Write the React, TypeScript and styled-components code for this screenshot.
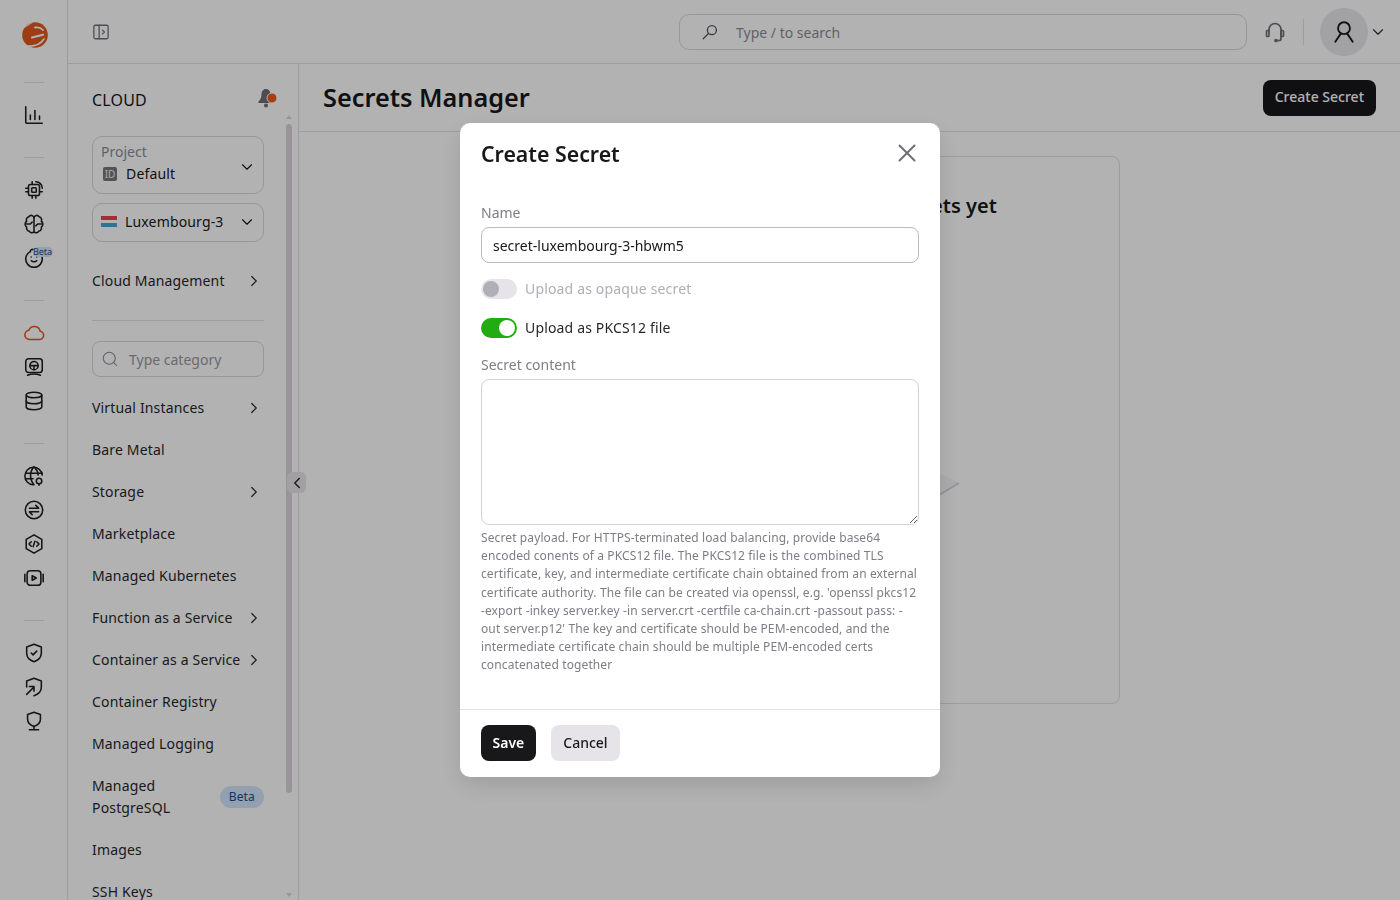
import React from "react";
import styled, { createGlobalStyle } from "styled-components";
import { ChevronDown, ChevronLeft, ChevronRight, Search, X } from "lucide-react";

const GlobalStyle = createGlobalStyle`
  * { box-sizing: border-box; }
  html, body { margin: 0; height: 100%; overflow: hidden; }
  body { font-family: "Noto Sans", "Open Sans", sans-serif; color: #18181b; background: #fff; letter-spacing: 0.01em; }
`;

const line = "#e2e0e6";

// shell
const Page = styled.div`
  display: flex;
  width: 1400px;
  height: 900px;
  overflow: hidden;
`;
const Rail = styled.nav`
  flex: 0 0 68px;
  border-right: 1px solid ${line};
  display: flex;
  flex-direction: column;
  align-items: center;
  padding-top: 20px;
`;
const RailLogo = styled.div`
  height: 30px;
  margin: 0 0 32px 3px;
  display: flex;
  align-items: center;
`;
const RailSep = styled.div`
  width: 20px;
  height: 1px;
  flex: none;
  background: ${line};
`;
const RailGroup = styled.div`
  padding: 15px 0 25px;
  display: flex;
  flex-direction: column;
`;
const RailIcon = styled.div<{ $active?: boolean }>`
  position: relative;
  width: 24px;
  height: 34px;
  display: flex;
  align-items: center;
  justify-content: center;
  color: ${(p) => (p.$active ? "#e2571e" : "#1f1f23")};
`;
const TinyBeta = styled.span`
  position: absolute;
  top: 6px;
  left: 11px;
  height: 10px;
  width: 20px;
  border-radius: 5px;
  background: #d3e5fb;
  color: #1d4d8b;
  font-size: 9px;
  line-height: 10px;
  letter-spacing: 0;
  text-align: center;
`;
const Body = styled.div`
  flex: 1;
  min-width: 0;
  display: flex;
  flex-direction: column;
`;
const Header = styled.header`
  flex: 0 0 64px;
  border-bottom: 1px solid ${line};
  display: flex;
  align-items: center;
  padding: 0 0 0 24px;
`;
const ToggleSide = styled.div`
  display: flex;
  flex: none;
  color: #6f6e77;
`;
const GlobalSearch = styled.div`
  flex: none;
  margin-left: 569px;
  width: 568px;
  height: 36px;
  border: 1px solid #d9d7dd;
  border-radius: 10px;
  display: flex;
  align-items: center;
  gap: 17px;
  padding: 1px 0 0 21px;
  color: #8e8c95;
  font-size: 14px;
  letter-spacing: 0;
`;
const Headset = styled.div`
  flex: none;
  margin-left: 16px;
  display: flex;
  color: #6f6e77;
`;
const HeaderSep = styled.div`
  flex: none;
  width: 1px;
  height: 26px;
  background: ${line};
  margin: 0 16px 0 16px;
`;
const Avatar = styled.div`
  flex: none;
  width: 48px;
  height: 48px;
  border-radius: 50%;
  background: #e9e8ec;
  display: flex;
  align-items: center;
  justify-content: center;
  color: #18181b;
`;
const AvatarCaret = styled.div`
  flex: none;
  display: flex;
  margin-left: 1px;
  color: #2b2b30;
`;

// sidebar
const Columns = styled.div`
  flex: 1;
  min-height: 0;
  display: flex;
`;
const Sidebar = styled.aside`
  position: relative;
  flex: 0 0 231px;
  border-right: 1px solid ${line};
  padding: 0 34px 0 24px;
  overflow: hidden;
`;
const SideHead = styled.div`
  height: 72px;
  display: flex;
  align-items: center;
  justify-content: space-between;
  font-size: 16px;
`;
const BellWrap = styled.div`
  display: flex;
  margin: -5px -14px 0 0;
`;
const ProjectBox = styled.div`
  height: 58px;
  border: 1px solid #d9d7dd;
  border-radius: 10px;
  padding: 5px 10px 0 8px;
  position: relative;
  font-size: 14px;
  line-height: 19px;
`;
const ProjectLabel = styled.div`
  color: #8e8c95;
  letter-spacing: 0;
`;
const ProjectValue = styled.div`
  display: flex;
  align-items: center;
  gap: 9px;
  margin: 3px 0 0 2px;
`;
const IdBadge = styled.span`
  width: 14px;
  height: 14px;
  border-radius: 2px;
  background: #77767e;
  color: #f2f2f2;
  font-size: 10px;
  line-height: 14px;
  letter-spacing: 0;
  text-align: center;
`;
const BoxCaret = styled.div`
  position: absolute;
  right: 7px;
  top: 21px;
  display: flex;
`;
const RegionBox = styled.div`
  margin-top: 9px;
  height: 39px;
  border: 1px solid #d9d7dd;
  border-radius: 10px;
  padding: 0 7px 2px 8px;
  display: flex;
  align-items: center;
  justify-content: space-between;
  font-size: 14px;
`;
const RegionName = styled.div`
  display: flex;
  align-items: center;
  gap: 8px;
`;
const Flag = styled.span`
  width: 16px;
  height: 11px;
  background: linear-gradient(#e0474c 0 33%, #fff 33% 66%, #3fa5d6 66%);
`;
const MenuRow = styled.div`
  display: flex;
  align-items: center;
  justify-content: space-between;
  padding: 10px 0;
  font-size: 14px;
  line-height: 22px;
  color: #27272a;
`;
const MenuCaret = styled.div`
  display: flex;
  margin-right: 1px;
`;
const TopMenu = styled.div`
  margin-top: 18px;
  padding-bottom: 18px;
  border-bottom: 1px solid ${line};
`;
const CategorySearch = styled.div`
  margin: 20px 0 10px;
  height: 36px;
  border: 1px solid #d9d7dd;
  border-radius: 8px;
  display: flex;
  align-items: center;
  gap: 10px;
  padding-left: 8px;
  font-size: 14px;
  letter-spacing: 0;
  color: #9a98a1;
`;
const BetaPill = styled.span`
  height: 22px;
  padding: 0 9px;
  border-radius: 11px;
  background: #d3e5fb;
  color: #1d4d8b;
  font-size: 12px;
  line-height: 22px;
`;
const ScrollThumb = styled.div`
  position: absolute;
  right: 6px;
  top: 60px;
  width: 6px;
  height: 669px;
  border-radius: 3px;
  background: #d8d6dc;
`;
const ScrollArrow = styled.div<{ $down?: boolean }>`
  position: absolute;
  right: 6px;
  ${(p) => (p.$down ? "bottom: 3px;" : "top: 51px;")}
  width: 0;
  height: 0;
  border-left: 3px solid transparent;
  border-right: 3px solid transparent;
  ${(p) => (p.$down ? "border-top: 4px solid #d8d6dc;" : "border-bottom: 4px solid #d8d6dc;")}
`;
const Collapse = styled.div`
  position: absolute;
  left: 287px;
  top: 472px;
  width: 19px;
  height: 21px;
  border-radius: 5px;
  background: #e8e6ea;
  display: flex;
  align-items: center;
  justify-content: center;
  color: #27272a;
`;

// main area
const Main = styled.main`
  flex: 1;
  min-width: 0;
  display: flex;
  flex-direction: column;
`;
const TitleRow = styled.div`
  flex: 0 0 68px;
  border-bottom: 1px solid ${line};
  display: flex;
  align-items: center;
  justify-content: space-between;
  padding: 0 24px;
`;
const Title = styled.h1`
  margin: 0 0 2px;
  font-size: 25.3px;
  font-weight: 600;
  letter-spacing: 0;
  color: #18181b;
`;
const PrimaryButton = styled.button`
  height: 36px;
  padding: 0 12px 2px;
  border: 0;
  border-radius: 8px;
  background: #18181b;
  color: #fff;
  font: 500 14px "Noto Sans", sans-serif;
`;
const Content = styled.div`
  flex: 1;
  display: flex;
  justify-content: center;
  align-items: flex-start;
  padding-top: 24px;
`;
const EmptyCard = styled.section`
  width: 541px;
  height: 548px;
  margin-left: -1px;
  border: 1px solid ${line};
  border-radius: 8px;
  display: flex;
  flex-direction: column;
  align-items: center;
  padding-top: 34px;
`;
const EmptyTitle = styled.div`
  font-size: 20px;
  font-weight: 600;
  line-height: 30px;
  letter-spacing: 0;
`;
const EmptyArt = styled.svg`
  margin-top: 200px;
`;

// dialog
const Overlay = styled.div`
  position: fixed;
  inset: 0;
  background: rgba(0, 0, 0, 0.3);
`;
const Modal = styled.div`
  position: fixed;
  left: 460px;
  top: 123px;
  width: 480px;
  height: 654px;
  background: #fff;
  border-radius: 10px;
  box-shadow: 0 8px 24px rgba(0, 0, 0, 0.12);
  display: flex;
  flex-direction: column;
`;
const ModalHead = styled.div`
  height: 62px;
  padding: 0 21px 2px;
  display: flex;
  align-items: center;
  justify-content: space-between;
`;
const ModalTitle = styled.h2`
  margin: 0;
  font-size: 21.3px;
  font-weight: 600;
  letter-spacing: 0;
  color: #18181b;
`;
const CloseBtn = styled.div`
  display: flex;
  color: #6f6e77;
  margin-right: -3px;
`;
const ModalBody = styled.div`
  flex: 1;
  padding: 18px 21px 0;
`;
const FieldLabel = styled.div`
  font-size: 14px;
  line-height: 20px;
  letter-spacing: 0;
  color: #7e7c85;
  margin-bottom: 4px;
`;
const TextInput = styled.input`
  display: block;
  width: 100%;
  height: 36px;
  padding: 0 11px;
  border: 1px solid #bcbac2;
  border-radius: 8px;
  outline: none;
  font: 14px "Noto Sans", sans-serif;
  color: #18181b;
`;
const SwitchRow = styled.div<{ $off?: boolean }>`
  display: flex;
  align-items: center;
  gap: 8px;
  height: 20px;
  margin-top: ${(p) => (p.$off ? "16px" : "19px")};
  font-size: 14px;
  color: ${(p) => (p.$off ? "#b0aeb6" : "#27272a")};
`;
const SwitchText = styled.span`
  margin-bottom: 2px;
`;
const Switch = styled.span<{ $on?: boolean }>`
  width: 36px;
  height: 20px;
  flex: none;
  border-radius: 10px;
  padding: 2px;
  display: flex;
  justify-content: ${(p) => (p.$on ? "flex-end" : "flex-start")};
  background: ${(p) => (p.$on ? "#22ac12" : "#e6e4e9")};
  &::after {
    content: "";
    width: 16px;
    height: 16px;
    border-radius: 50%;
    background: ${(p) => (p.$on ? "#fff" : "#b0aeb6")};
  }
`;
const SecretLabel = styled(FieldLabel)`
  margin-top: 17px;
`;
const SecretArea = styled.textarea`
  display: block;
  width: 100%;
  height: 146px;
  border: 1px solid #d4d2d9;
  border-radius: 8px;
  outline: none;
  resize: vertical;
`;
const Help = styled.p`
  margin: 4px 0 0;
  font-size: 12px;
  line-height: 18.2px;
  letter-spacing: 0.11px;
  color: #7e7c85;
`;
const ModalFoot = styled.div`
  height: 68px;
  border-top: 1px solid ${line};
  padding: 15px 21px 0;
  display: flex;
  gap: 15px;
`;
const SaveButton = styled(PrimaryButton)`
  padding: 0 11.5px 2px;
  font-weight: 600;
`;
const CancelButton = styled.button`
  height: 36px;
  padding: 0 12.5px 2px;
  border: 0;
  border-radius: 8px;
  background: #e6e4e9;
  color: #18181b;
  font: 500 14px "Noto Sans", sans-serif;
`;

// drawn icons
const Ico = ({ children, size = 22 }: { children: React.ReactNode; size?: number }) => (
  <svg width={size} height={size} viewBox="0 0 24 24" fill="none" stroke="currentColor" strokeWidth="1.7" strokeLinecap="round" strokeLinejoin="round">
    {children}
  </svg>
);

const Logo = () => (
  <svg width="28" height="30" viewBox="0 0 28 30" fill="none">
    <circle cx="14" cy="15" r="12.800" fill="#e2571e" />
    <path d="M14 7.500c3-.6 6 .4 8 2.500" stroke="#fff" strokeWidth="1.800" strokeLinecap="round" />
    <path d="M11 17.500l11-2.800" stroke="#fff" strokeWidth="2.200" strokeLinecap="round" />
    <path d="M6 26c6 .5 13-1 17-7" stroke="#fff" strokeWidth="1.600" strokeLinecap="round" />
    <path d="M3 8.500C5 5 9 2.500 12.500 2.500 9 4 6 6 3 8.500z" fill="#fff" />
  </svg>
);

const railGroups: React.ReactNode[][] = [
  [
    <Ico key="chart"><path d="M3 3v17a1 1 0 0 0 1 1h17" /><path d="M8 17v-5" /><path d="M13 17V7" /><path d="M18 17v-4" /></Ico>,
  ],
  [
    <Ico key="chip"><rect x="6" y="6" width="12" height="12" rx="2" /><rect x="9.500" y="9.500" width="5" height="5" rx="1" /><path d="M3 10h3M3 14h3M10 18v3M14 18v3M10 3v3M18 14h3" /><path d="M14 3c4 0 7 3 7 7" /></Ico>,
    <Ico key="brain"><path d="M12 4v16" /><path d="M12 5a3 3 0 0 0-5.500-1A3.500 3.500 0 0 0 4 9a4 4 0 0 0 0 6.500A3.500 3.500 0 0 0 7 20a3 3 0 0 0 5 .5 3 3 0 0 0 5-.5 3.500 3.500 0 0 0 3-4.500A4 4 0 0 0 20 9a3.500 3.500 0 0 0-2.500-5A3 3 0 0 0 12 5z" /><path d="M4 12h4l2-2M20 12h-4l-2 2" /></Ico>,
    <React.Fragment key="smile"><Ico><path d="M8 5a9 9 0 1 0 8 0" /><path d="M8 5c0-2 2-3 3-2" /><path d="M9 15c1.500 1.500 4.500 1.500 6 0" /><path d="M9 11h.01M15 11h.01" /></Ico><TinyBeta>Beta</TinyBeta></React.Fragment>,
  ],
  [
    <Ico key="cloud"><path d="M17.500 19H7a5 5 0 0 1-.6-9.960A6.500 6.500 0 0 1 18.800 10.100 4.500 4.500 0 0 1 17.500 19z" /></Ico>,
    <Ico key="monitor"><rect x="3" y="3" width="18" height="15" rx="3" /><circle cx="12" cy="10.500" r="4.500" /><path d="M7.500 10.500h9M12 10.500V15" /><path d="M5 21c4-1.500 10-1.500 14 0" /></Ico>,
    <Ico key="db"><ellipse cx="12" cy="5.500" rx="8.500" ry="3" /><path d="M3.500 5.500v13c0 1.700 3.800 3 8.500 3s8.500-1.300 8.500-3v-13" /><path d="M3.500 12c0 1.700 3.800 3 8.500 3s8.500-1.300 8.500-3" /></Ico>,
  ],
  [
    <Ico key="globe"><path d="M21 11a9.500 9.500 0 1 0-10 10.500" /><path d="M12 2c-5 5-5 14 0 19.500M12 2c3 3 4.500 6 4.500 9" /><path d="M3 9h18M3 15h8" /><circle cx="17.500" cy="17.500" r="3" /><path d="M17.500 20.500v1.500" /></Ico>,
    <Ico key="swap"><circle cx="12" cy="12" r="9.500" /><path d="M7 10h10l-3-3" /><path d="M17 14H7l3 3" /></Ico>,
    <Ico key="code"><path d="M12 2l8.500 5v10L12 22l-8.500-5V7z" /><path d="M9 9.500L6.500 12 9 14.500M15 9.500l2.500 2.500-2.500 2.500M13 9l-2 6" /></Ico>,
    <Ico key="play"><rect x="4.500" y="4" width="15" height="16" rx="3.500" /><path d="M2 8v8M22 8v8" /><path d="M10 9.500v5l4.500-2.500z" /></Ico>,
  ],
  [
    <Ico key="shield"><path d="M12 2.500l8 3v6.500c0 5-3.500 8-8 9.500-4.500-1.500-8-4.500-8-9.500V5.500z" /><path d="M9 12l2 2 4-4" /></Ico>,
    <Ico key="shieldArrow"><path d="M4 12V5.500l8-3 8 3V12c0 5-3.500 8-8 9.500" /><path d="M4 20l8-8M7 11.500h5v5" /></Ico>,
    <Ico key="bulb"><path d="M12 2.500l7 2.500v5c0 4-3 6.500-7 8-4-1.500-7-4-7-8V5z" /><path d="M12 18v3M7 21.500h10" /></Ico>,
  ],
];

type Item = { label: React.ReactNode; arrow?: boolean; beta?: boolean };
const menu: Item[] = [
  { label: "Virtual Instances", arrow: true },
  { label: "Bare Metal" },
  { label: "Storage", arrow: true },
  { label: "Marketplace" },
  { label: "Managed Kubernetes" },
  { label: "Function as a Service", arrow: true },
  { label: "Container as a Service", arrow: true },
  { label: "Container Registry" },
  { label: "Managed Logging" },
  { label: <>Managed<br />PostgreSQL</>, beta: true },
  { label: "Images" },
  { label: "SSH Keys" },
];

const App = () => {
  return (
    <Page>
      <GlobalStyle />
      <Rail>
        <RailLogo><Logo /></RailLogo>
        {railGroups.map((group, i) => (
          <React.Fragment key={i}>
            <RailSep />
            <RailGroup>
              {group.map((icon, j) => (
                <RailIcon key={j} $active={i === 2 && j === 0}>{icon}</RailIcon>
              ))}
            </RailGroup>
          </React.Fragment>
        ))}
      </Rail>
      <Body>
        <Header>
          <ToggleSide>
            <Ico size={18}><rect x="2.500" y="3" width="19" height="18" rx="2" /><path d="M9.500 3v18" /><path d="M14 9.500l2.500 2.500-2.500 2.500" /></Ico>
          </ToggleSide>
          <GlobalSearch>
            <svg width="18" height="18" viewBox="0 0 24 24" fill="none" stroke="#52515a" strokeWidth="1.700" strokeLinecap="round"><circle cx="14.500" cy="9.500" r="6" /><path d="M10 14l-7 7" /></svg>
            Type / to search
          </GlobalSearch>
          <Headset>
            <Ico size={24}><path d="M6 12V9.500a6 6 0 0 1 12 0V19c0 1-1 1.500-2 1.500h-2" /><rect x="3.500" y="10.500" width="2.500" height="6" rx="1" /><rect x="18" y="10.500" width="2.500" height="6" rx="1" /><circle cx="13" cy="20.500" r="1" /></Ico>
          </Headset>
          <HeaderSep />
          <Avatar>
            <Ico size={26}><circle cx="12" cy="8.500" r="5.500" /><path d="M9 13.500L4 21M15 13.500L20 21" /></Ico>
          </Avatar>
          <AvatarCaret><ChevronDown size={18} strokeWidth={1.5} /></AvatarCaret>
        </Header>
        <Columns>
          <Sidebar>
            <SideHead>
              CLOUD
              <BellWrap>
                <svg width="21" height="20" viewBox="0 0 21 20">
                  <path d="M9 1c-3 0-4.500 2.500-4.500 5.500 0 3.500-1.500 5.500-3 7v1.500h15v-1.500c-1.500-1.500-3-3.500-3-7C13.500 3.500 12 1 9 1z" fill="#6f6e77" />
                  <circle cx="9" cy="17.500" r="2" fill="#6f6e77" />
                  <circle cx="15" cy="10" r="5" fill="#ef5a13" stroke="#fff" strokeWidth="1" />
                </svg>
              </BellWrap>
            </SideHead>
            <ProjectBox>
              <ProjectLabel>Project</ProjectLabel>
              <ProjectValue><IdBadge>ID</IdBadge>Default</ProjectValue>
              <BoxCaret><ChevronDown size={18} strokeWidth={1.5} /></BoxCaret>
            </ProjectBox>
            <RegionBox>
              <RegionName><Flag />Luxembourg-3</RegionName>
              <ChevronDown size={18} strokeWidth={1.5} />
            </RegionBox>
            <TopMenu>
              <MenuRow>
                Cloud Management
                <MenuCaret><ChevronRight size={18} strokeWidth={1.6} /></MenuCaret>
              </MenuRow>
            </TopMenu>
            <CategorySearch>
              <Search size={18} strokeWidth={1.4} color="#8e8c95" />
              Type category
            </CategorySearch>
            {menu.map((item, i) => (
              <MenuRow key={i}>
                <span>{item.label}</span>
                {item.arrow && <MenuCaret><ChevronRight size={18} strokeWidth={1.6} /></MenuCaret>}
                {item.beta && <BetaPill>Beta</BetaPill>}
              </MenuRow>
            ))}
            <ScrollArrow />
            <ScrollThumb />
            <ScrollArrow $down />
          </Sidebar>
          <Main>
            <TitleRow>
              <Title>Secrets Manager</Title>
              <PrimaryButton>Create Secret</PrimaryButton>
            </TitleRow>
            <Content>
              <EmptyCard>
                <EmptyTitle>You don't have any secrets yet</EmptyTitle>
                <EmptyArt width="260" height="140" viewBox="0 0 260 140">
                  <path d="M130 7l110 55-110 66-110-66z" fill="#f7f6f8" />
                  <path d="M20 62l110 66 110-66" fill="none" stroke="#d5d3d9" strokeWidth="2" />
                </EmptyArt>
              </EmptyCard>
            </Content>
          </Main>
        </Columns>
      </Body>
      <Collapse><ChevronLeft size={18} strokeWidth={2} /></Collapse>
      <Overlay />
      <Modal>
        <ModalHead>
          <ModalTitle>Create Secret</ModalTitle>
          <CloseBtn><X size={30} strokeWidth={1.6} /></CloseBtn>
        </ModalHead>
        <ModalBody>
          <FieldLabel>Name</FieldLabel>
          <TextInput readOnly value="secret-luxembourg-3-hbwm5" />
          <SwitchRow $off><Switch /><SwitchText>Upload as opaque secret</SwitchText></SwitchRow>
          <SwitchRow><Switch $on /><SwitchText>Upload as PKCS12 file</SwitchText></SwitchRow>
          <SecretLabel>Secret content</SecretLabel>
          <SecretArea readOnly />
          <Help>
            Secret payload. For HTTPS-terminated load balancing, provide base64 encoded conents of a PKCS12 file. The PKCS12 file is the combined TLS certificate, key, and intermediate certificate chain obtained from an external certificate authority. The file can be created via openssl, e.g. 'openssl pkcs12 -export -inkey server.key -in server.crt -certfile ca-chain.crt -passout pass: -out server.p12' The key and certificate should be PEM-encoded, and the intermediate certificate chain should be multiple PEM-encoded certs concatenated together
          </Help>
        </ModalBody>
        <ModalFoot>
          <SaveButton>Save</SaveButton>
          <CancelButton>Cancel</CancelButton>
        </ModalFoot>
      </Modal>
    </Page>
  );
};

export default App;
